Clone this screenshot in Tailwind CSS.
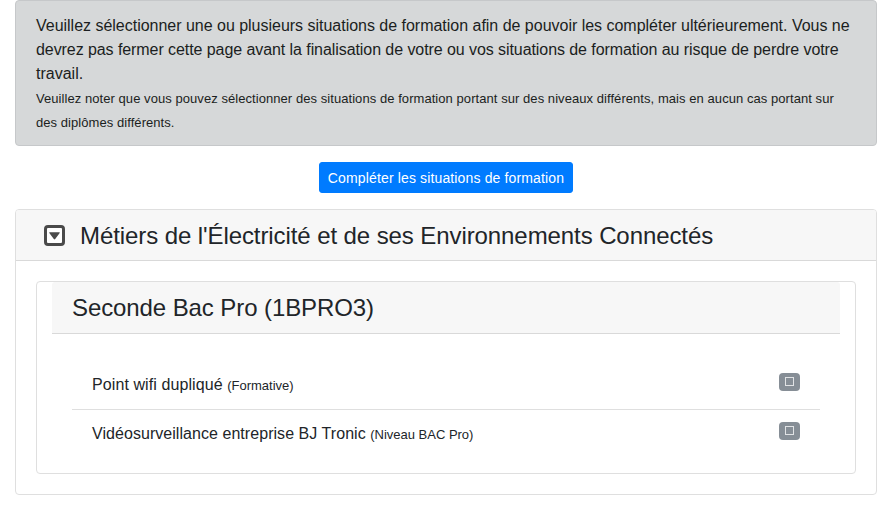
<!DOCTYPE html>
<html lang="fr">
<head>
  <meta charset="UTF-8" />
  <meta name="viewport" content="width=device-width, initial-scale=1.0" />
  <title>Situations de formation</title>
  <script src="https://cdn.jsdelivr.net/npm/@tailwindcss/browser@4"></script>
</head>
<body class="bg-white text-[#212529] text-base font-['Liberation_Sans',Arial,sans-serif] px-[15px] overflow-hidden">
  <!-- Notice -->
  <div class="bg-[#d6d8d9] border border-[#c6c8ca] text-[#1b1e21] rounded px-5 pt-[13px] pb-[11px] mb-4 whitespace-nowrap">
    <span class="tracking-[-0.017px]">Veuillez sélectionner une ou plusieurs situations de formation afin de pouvoir les compléter ultérieurement. Vous ne</span><br />
    <span class="tracking-[-0.073px]">devrez pas fermer cette page avant la finalisation de votre ou vos situations de formation au risque de perdre votre</span><br />
    travail.<br />
    <small class="text-[13px] tracking-[0.06px]">Veuillez noter que vous pouvez sélectionner des situations de formation portant sur des niveaux différents, mais en aucun cas portant sur</small><br />
    <small class="text-[13px] tracking-[0.06px]">des diplômes différents.</small>
  </div>

  <div class="flex justify-center mb-4">
    <button class="bg-[#007bff] border border-[#007bff] text-white text-sm leading-[21px] tracking-[0.14px] rounded-[3px] w-[254px] pt-[5px] pb-[3px] whitespace-nowrap">Compléter les situations de formation</button>
  </div>

  <!-- Diploma -->
  <div class="border border-[#dfdfdf] rounded">
    <div class="flex items-center bg-[#f7f7f7] border-b border-[#d9d9d9] h-[51px] pl-7 rounded-t-[3px]">
      <svg class="w-[21px] h-[21px] mr-[15px]" viewBox="0 0 21 21" fill="#4a4a4a">
        <rect x="1.5" y="1.5" width="18" height="18" rx="2.5" fill="#fff" stroke="#4a4a4a" stroke-width="3" />
        <path d="M5.700 7.200h9.600q.8 0 .4.700l-4.500 6.200q-.7.800-1.400 0l-4.500-6.200q-.4-.7.4-.7z" />
      </svg>
      <h4 class="text-2xl leading-[26px] tracking-[-0.087px] pt-0.5">Métiers de l'Électricité et de ses Environnements Connectés</h4>
    </div>

    <div class="p-5">
      <!-- Level -->
      <div class="border border-[#dfdfdf] rounded px-[15px]">
        <div class="bg-[#f7f7f7] border-b border-[#d9d9d9] h-[52px] px-5 py-3 rounded-t-[3px]">
          <h4 class="text-2xl leading-[27px] tracking-[-0.09px]">Seconde Bac Pro (1BPRO3)</h4>
        </div>
        <ul class="px-5 pt-[27px] pb-[15px]">
          <li class="flex justify-between items-start border-b border-[#dfdfdf] px-5 py-3">
            <span class="tracking-[0.09px]">Point wifi dupliqué <small class="text-[13px] tracking-[-0.01px]">(Formative)</small></span>
            <button class="bg-[#868e96] rounded w-[21px] h-[18px] pl-1.5 pt-1 flex items-start">
              <span class="w-[9px] h-[9px] border border-[#e1e3e5]"></span>
            </button>
          </li>
          <li class="flex justify-between items-start px-5 py-3">
            <span class="tracking-[0.05px]">Vidéosurveillance entreprise BJ Tronic <small class="text-[13px] tracking-[-0.01px]">(Niveau BAC Pro)</small></span>
            <button class="bg-[#868e96] rounded w-[21px] h-[18px] pl-1.5 pt-1 flex items-start">
              <span class="w-[9px] h-[9px] border border-[#e1e3e5]"></span>
            </button>
          </li>
        </ul>
      </div>
    </div>
  </div>
</body>
</html>
